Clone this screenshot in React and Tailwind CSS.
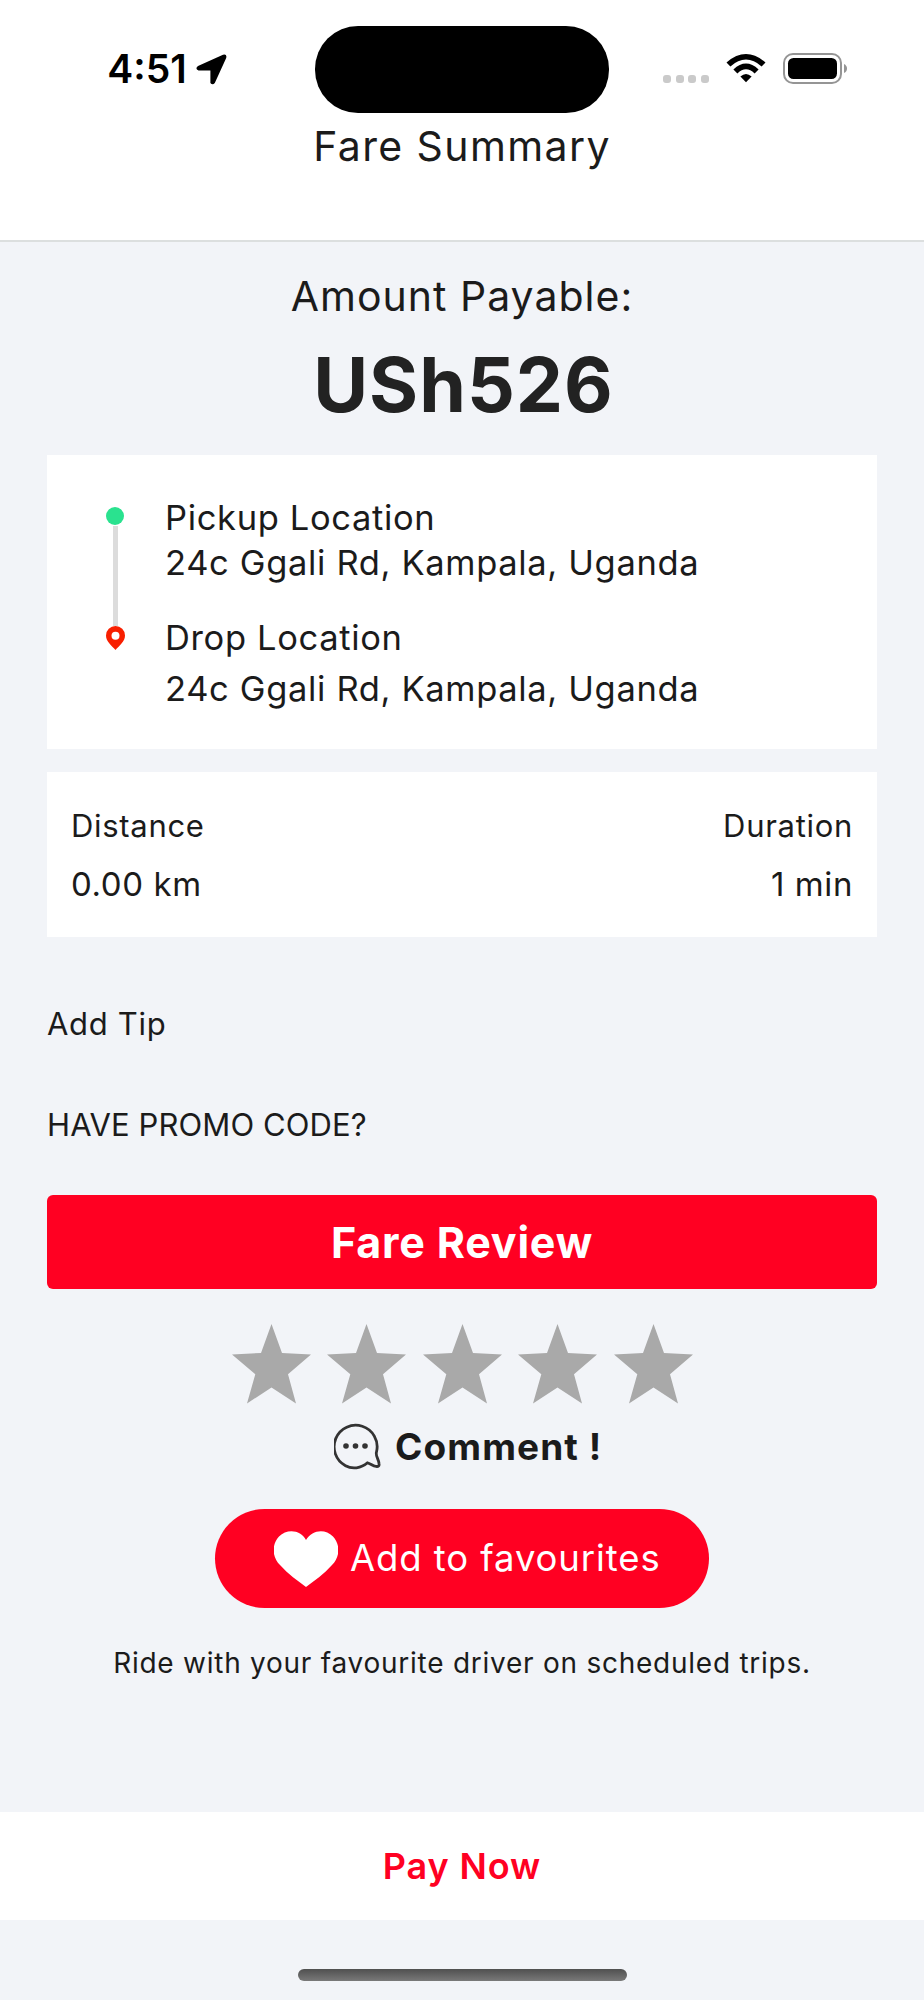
import clsx from "clsx";

const STARS = [1, 2, 3, 4, 5];

function StatusBar() {
  return (
    <div className="flex h-[113px] items-start pt-[26px]">
      <div className="flex h-[86px] w-[315px] items-center pl-[105px]">
        <span className="w-[91px] text-[39px] leading-[54px] font-semibold whitespace-nowrap text-black">
          <span className="-ml-[7px]">4:51</span>
        </span>
        <svg width="31" height="31" viewBox="0 0 31 31" className="shrink-0">
          <path
            d="M2 12 27 .8Q31.2-.2 30.2 4L18.8 29Q16.6 31.5 14.4 29V16.6H2.5Q-1.4 14.6 2 12Z"
            fill="#000"
          />
        </svg>
      </div>

      <div className="h-[87px] w-[294px] rounded-[43px] bg-black" />

      <div className="flex h-[86px] flex-1 items-start pt-[27px] pl-[54px]">
        <div className="flex gap-[4.6px] pt-[22px]">
          {[0, 1, 2, 3].map((i) => (
            <span key={i} className="size-2 rounded-[3px] bg-[#cacaca]" />
          ))}
        </div>
        <svg width="40" height="30" viewBox="0 0 40 30" className="ml-[17px]">
          <path d="M.5 9.4Q20-7.4 39.5 9.4L35.6 13.4Q20-.4 4.4 13.4Z" />
          <path d="M7.4 16.4Q20 4.8 32.6 16.4L28.6 20.4Q20 12.2 11.4 20.4Z" />
          <path d="M14.4 23.4Q20 18.4 25.6 23.4L20 29.2Z" />
        </svg>
        <svg width="66" height="32" viewBox="0 0 66 32" className="ml-[17px]">
          <rect x="1" y="1" width="57" height="29" rx="9" fill="none" stroke="#959595" strokeWidth="2" />
          <rect x="5" y="5" width="49" height="21" rx="5.5" />
          <path d="M61 11Q64 12.5 64 15.5T61 20Z" fill="#959595" />
        </svg>
      </div>
    </div>
  );
}

function RouteLine() {
  return (
    <div className="flex w-5 flex-col items-center pt-[52px]">
      <span className="size-[18px] rounded-full bg-[#2ae28f]" />
      <span className="mt-px h-[100px] w-[5px] bg-[#dcdcdc]" />
      <svg width="19" height="24" viewBox="0 0 19 24">
        <path
          d="M9.5 0A9.5 9.5 0 0 0 0 9.5C0 15.5 5.6 19.4 9.5 24 13.4 19.4 19 15.5 19 9.5A9.5 9.5 0 0 0 9.5 0Z"
          fill="#f81f00"
        />
        <circle cx="9.5" cy="9.7" r="4" fill="#fff" />
      </svg>
    </div>
  );
}

function Stat({ label, value, alignRight }) {
  return (
    <div className={clsx("flex flex-col", alignRight && "items-end")}>
      <span className="text-[31px] leading-[58px] tracking-[0.7px]">{label}</span>
      <span className="text-[33px] leading-[58px] tracking-[0.6px]">{value}</span>
    </div>
  );
}

export default function App() {
  return (
    <div className="flex h-[2000px] w-[924px] flex-col bg-[#f2f4f8] font-['Inter','Liberation_Sans',sans-serif] text-[#1b1b1b]">
      <header className="h-[242px] border-b-2 border-[#dcdfdf] bg-white text-center">
        <StatusBar />
        <h1 className="text-[41px] leading-[67px] tracking-[1.4px]">Fare Summary</h1>
      </header>

      <main className="flex flex-1 flex-col px-[47px]">
        <p className="mt-[27px] text-center text-[41px] leading-[55px] tracking-[1px]">
          Amount Payable:
        </p>
        <p className="mt-[21px] pl-[3px] text-center text-[75px] leading-[80px] font-bold tracking-[1px] text-[#222]">
          USh526
        </p>

        {/* Pickup and drop addresses */}
        <section className="mt-[30px] flex h-[294px] bg-white pl-[58px]">
          <RouteLine />
          <div className="flex flex-col pt-[40px] pl-[40px] text-[34.5px] tracking-[0.65px]">
            <span className="leading-[45px]">Pickup Location</span>
            <span className="leading-[45px]">24c Ggali Rd, Kampala, Uganda</span>
            <span className="mt-[28px] leading-[50px]">Drop Location</span>
            <span className="leading-[52px]">24c Ggali Rd, Kampala, Uganda</span>
          </div>
        </section>

        <section className="mt-[23px] flex h-[165px] justify-between bg-white px-6 pt-[25px]">
          <Stat label="Distance" value="0.00 km" />
          <Stat label="Duration" value="1 min" alignRight />
        </section>

        <button className="mt-[62px] self-start text-[31px] leading-[50px] tracking-[0.7px]">
          Add Tip
        </button>
        <button className="mt-[51px] self-start text-[31px] leading-[50px] tracking-[0.1px]">
          HAVE PROMO CODE?
        </button>

        <button className="mt-[45px] h-[94px] rounded-md bg-[#ff0022] text-[43px] font-bold tracking-[0.8px] text-white">
          Fare Review
        </button>

        {/* Driver rating */}
        <div className="mt-[35px] flex justify-center gap-[16.5px]">
          {STARS.map((star) => (
            <svg key={star} width="79" height="80" viewBox="0 0 79 80">
              <polygon
                points="39.5,0 50,29 79,30.5 56,50.3 64,79.5 39.5,63.5 15,79.5 23.3,50.3 0,30.5 29,29"
                fill="#a9a9a9"
              />
            </svg>
          ))}
        </div>

        <button className="mt-[18px] flex h-[50px] items-center self-start pl-[287px] text-[37px] font-bold tracking-[1.1px]">
          <svg width="47" height="47" viewBox="0 0 47 47" fill="none" className="mr-[14px] mb-[2px]">
            <path
              d="M33.5 39.8C27 45.5 18 46.4 11.5 42.7A21.5 21.5 0 1 1 42.6 28.5C41 32.5 44.5 35.5 45 40.5Q45.7 44 42 43.4C38.8 43.4 36.5 40.4 33.5 39.8Z"
              stroke="#333"
              strokeWidth="2.8"
            />
            <circle cx="12" cy="23" r="2.8" fill="#333" />
            <circle cx="21.5" cy="23" r="2.8" fill="#333" />
            <circle cx="31" cy="23" r="2.8" fill="#333" />
          </svg>
          Comment !
        </button>

        <button className="mt-[37px] flex h-[99px] w-[494px] items-center self-center rounded-full bg-[#ff0022] pl-[59px] text-[36.5px] tracking-[0.9px] text-white">
          <svg width="64" height="56" viewBox="0 0 64 56" className="mr-[12px]">
            <path
              d="M32 9C27-1 13-2.5 5 5.5-3.5 15-1 27 6 34 14 43 24 50 32 56 40 50 50 43 58 34 65 27 67.5 15 59 5.5 51-2.5 38-1 32 9Z"
              fill="#fff"
            />
          </svg>
          Add to favourites
        </button>

        <p className="mt-[30px] text-center text-[28px] leading-[50px] tracking-[0.75px]">
          Ride with your favourite driver on scheduled trips.
        </p>
      </main>

      <footer className="h-[188px]">
        <button className="block h-[108px] w-full bg-white text-[36px] font-semibold tracking-[0.9px] text-[#ff0022]">
          Pay Now
        </button>
        <div className="mx-auto mt-[49px] h-[12px] w-[329px] rounded-full bg-linear-to-b from-[#505050] to-[#797979]" />
      </footer>
    </div>
  );
}
